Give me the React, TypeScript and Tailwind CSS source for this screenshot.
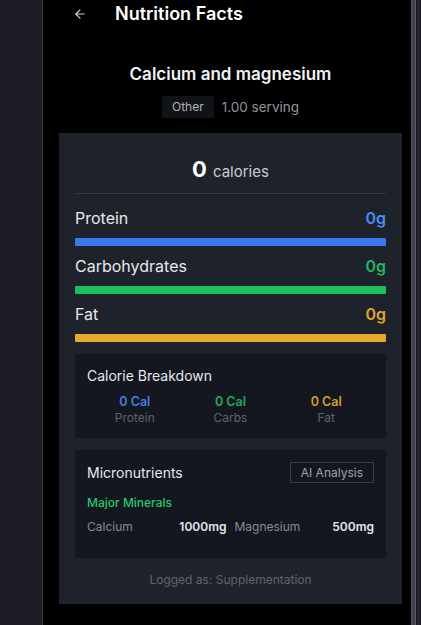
import { ArrowLeft } from "lucide-react";

const macros = [
  { name: "Protein", value: "0g", text: "text-[#4a8cf2]", bar: "bg-[#3b78f0]" },
  { name: "Carbohydrates", value: "0g", text: "text-[#22b75f]", bar: "bg-[#1ebe5c]" },
  { name: "Fat", value: "0g", text: "text-[#dea62e]", bar: "bg-[#e7a92d]" },
];

const breakdown = [
  { value: "0 Cal", label: "Protein", text: "text-[#3f80e2]" },
  { value: "0 Cal", label: "Carbs", text: "text-[#20aa5a]" },
  { value: "0 Cal", label: "Fat", text: "text-[#d39e2b]" },
];

const minerals = [
  { name: "Calcium", amount: "1000mg" },
  { name: "Magnesium", amount: "500mg" },
];

export default function App() {
  return (
    <div className="flex h-[625px] w-[421px] overflow-hidden bg-black font-['Inter',sans-serif]">
      {/* Left sidebar strip */}
      <div className="w-[42px] flex-none bg-[#1c1d25]" />
      <div className="w-px flex-none bg-[#3a3c44]" />

      {/* Main panel */}
      <div className="w-[368px] flex-none overflow-hidden bg-black">
        <div className="w-[375px]">
          {/* Header */}
          <div className="flex h-[28px] items-center pl-[30px]">
            <ArrowLeft size={14} strokeWidth={2} className="text-[#d4d6da]" />
            <h1 className="ml-[28px] text-lg font-semibold leading-7 text-white">
              Nutrition Facts
            </h1>
          </div>

          {/* Food name */}
          <h2 className="mt-8 text-center text-[17px] font-semibold leading-7 text-[#f2f2f2]">
            Calcium and magnesium
          </h2>
          <div className="mt-2 flex items-center justify-center gap-2">
            <span className="flex h-[22px] items-center rounded-[2px] bg-[#111318] px-2.5 text-xs text-[#b0b3b8]">
              Other
            </span>
            <span className="text-[13.5px] text-[#8f949c]">1.00 serving</span>
          </div>

          {/* Card */}
          <div className="mx-4 mt-[15px] bg-[#1e222b] px-4 pt-5 pb-4">
            <div className="flex items-baseline justify-center gap-1.5 border-b border-[#343842] pb-2">
              <span className="text-[22px] font-bold leading-8 text-white">0</span>
              <span className="text-[15px] text-[#c9cbcf]">calories</span>
            </div>

            {/* Macros */}
            <div className="mt-3 flex flex-col gap-2">
              {macros.map((m) => (
                <div key={m.name}>
                  <div className="flex h-6 items-center justify-between">
                    <span className="text-base text-[#e8e9eb]">{m.name}</span>
                    <span className={`text-base font-semibold ${m.text}`}>{m.value}</span>
                  </div>
                  <div className={`mt-2 h-2 rounded-[1px] ${m.bar}`} />
                </div>
              ))}
            </div>

            {/* Calorie Breakdown */}
            <div className="mt-3 rounded-[2px] bg-[#141720] p-3">
              <h3 className="mb-2 text-sm leading-5 text-[#e5e7eb]">Calorie Breakdown</h3>
              <div className="grid grid-cols-3 text-center">
                {breakdown.map((b) => (
                  <div key={b.label}>
                    <div className={`text-[12.5px] font-semibold leading-4 ${b.text}`}>{b.value}</div>
                    <div className="text-xs leading-4 text-[#5d6370]">{b.label}</div>
                  </div>
                ))}
              </div>
            </div>

            {/* Micronutrients */}
            <div className="mt-3 rounded-[2px] bg-[#141720] p-3 pb-[23px]">
              <div className="flex h-[21px] items-center justify-between">
                <h3 className="text-sm text-[#e5e7eb]">Micronutrients</h3>
                <button className="flex h-[21px] items-center border border-[#3a3e47] px-2.5 text-xs text-[#9ca3af]">
                  AI Analysis
                </button>
              </div>
              <div className="mt-3 text-xs font-medium leading-4 text-[#2bc469]">Major Minerals</div>
              <div className="mt-2 grid grid-cols-2 gap-2">
                {minerals.map((n) => (
                  <div key={n.name} className="flex items-center justify-between text-xs leading-4">
                    <span className="text-[#858a94]">{n.name}</span>
                    <span className="font-semibold text-[#e5e7eb]">{n.amount}</span>
                  </div>
                ))}
              </div>
            </div>

            <p className="mt-[14px] text-center text-xs leading-4 text-[#5f6570]">
              Logged as: Supplementation
            </p>
          </div>
        </div>
      </div>

      {/* Scrollbar / right edge */}
      <div className="flex flex-none">
        <div className="w-px bg-[#50535c]" />
        <div className="w-[3px] bg-[#3f424c]" />
        <div className="w-px bg-[#5b5e68]" />
        <div className="w-[2px] bg-[#1c1d25]" />
        <div className="w-px bg-[#30323a]" />
        <div className="w-[2px] bg-[#1c1d25]" />
      </div>
    </div>
  );
}
